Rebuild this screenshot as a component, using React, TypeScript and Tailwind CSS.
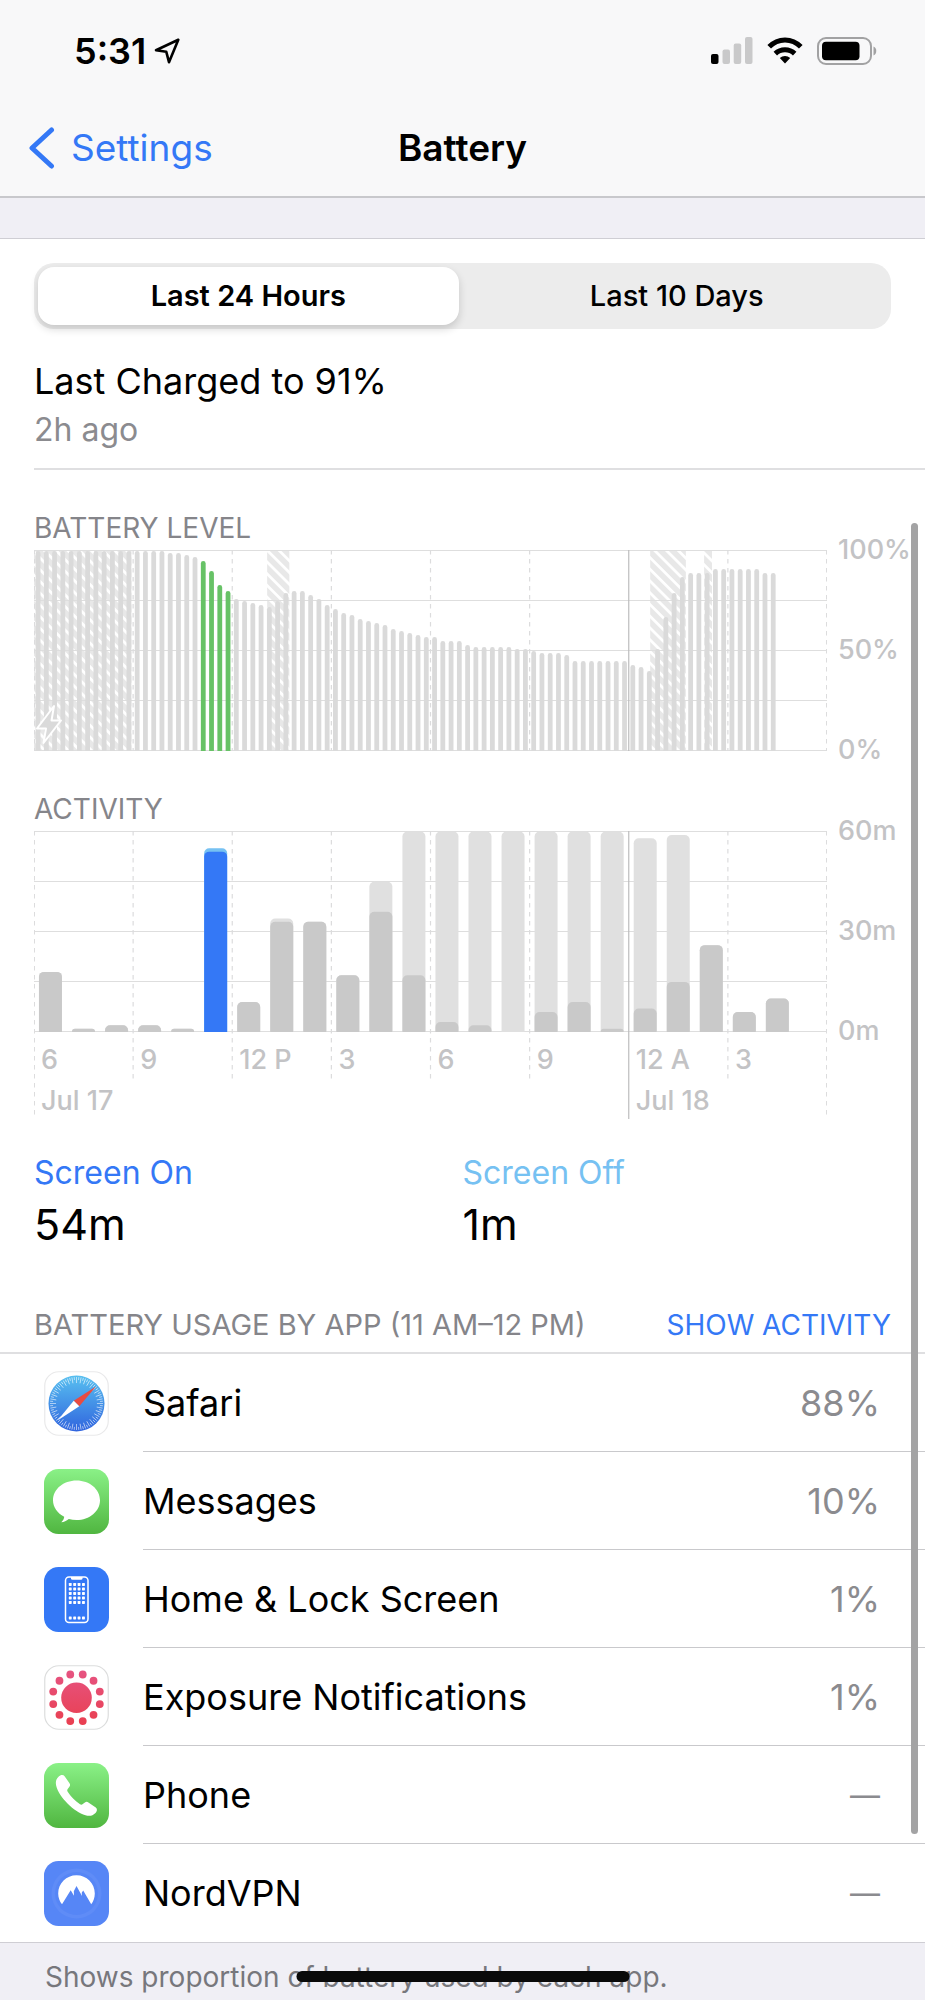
import { useState } from "react";
import type { ReactNode } from "react";

const PLOT_HEIGHT = 201;

const levels: number[] = [
  100, 100, 100, 100, 100, 100, 100, 100, 100, 100, 100, 100, 100, 100, 100, 100, 99, 99, 98, 97,
  95, 90, 83, 80, 76, 75, 74, 73, 72, 75, 79, 80, 80, 78, 76, 73, 71, 69, 68, 66,
  65, 64, 63, 61, 60, 59, 58, 57, 57, 55, 55, 55, 53, 52, 52, 52, 52, 52, 51, 51,
  50, 49, 49, 49, 48, 45, 45, 45, 45, 45, 45, 45, 43, 42, 40, 51, 67, 79, 87, 89,
  89, 89, 91, 91, 91, 91, 91, 91, 89, 89,
];

// Charging periods, as percentages of the day shown.
const charging: [number, number][] = [
  [0, 12.3],
  [29.4, 32.2],
  [77.7, 82.2],
  [84.5, 85.5],
];

// Minutes per hour: [screen on, total].
const activity: [number, number][] = [
  [18, 18], [1, 1], [2, 2], [2, 2], [1, 1], [54, 55], [9, 9], [33, 34],
  [33, 33], [17, 17], [36, 45], [17, 60], [3, 60], [2, 60], [0, 60], [6, 60],
  [9, 60], [1, 60], [7, 58], [15, 59], [26, 26], [6, 6], [10, 10],
];

const hours = ["6", "9", "12 P", "3", "6", "9", "12 A", "3"];
const SELECTED_HOUR = 5;

function Grid({ height, tail }: { height: number; tail: number }) {
  return (
    <g>
      {[0, 1, 2, 3, 4].map((n) => (
        <line key={n} x1="0" x2="100%" y1={n * 50 + 0.5} y2={n * 50 + 0.5} stroke="#dedede" strokeWidth="1" />
      ))}
      {[0, 1, 2, 3, 4, 5, 6, 7, 8].map((n) => {
        const x = `${n * 12.5}%`;
        const end = n === 0 || n === 8 ? height : height - tail;
        return n === 6 ? null : (
          <line key={n} x1={x} x2={x} y1="0" y2={end} stroke="#dcdcdd" strokeWidth={n % 8 ? 1.2 : 2} strokeDasharray="4.5 4.5" />
        );
      })}
    </g>
  );
}

function LevelChart() {
  return (
    <svg className="block h-[201px] min-w-0 flex-1" role="img" aria-label="Battery level over the last 24 hours">
      <defs>
        <pattern id="hatch" width="8.300" height="8.300" patternUnits="userSpaceOnUse" patternTransform="rotate(-45)">
          <rect width="5.600" height="8.300" fill="#e8e8e8" />
        </pattern>
      </defs>
      {charging.map(([from, to]) => (
        <rect key={from} x={`${from}%`} width={`${to - from}%`} y="0" height="201" fill="url(#hatch)" />
      ))}
      <Grid height={PLOT_HEIGHT} tail={0} />
      {levels.map((level, i) => (
        <rect
          key={i}
          x={`${((i + 0.2) / 96) * 100}%`}
          width="4.8"
          y={PLOT_HEIGHT - level * 2}
          height={level * 2 + 6}
          rx="2.4"
          fill={i >= 20 && i < 24 ? "#67c266" : "#dadada"}
        />
      ))}
      <line x1="75%" x2="75%" y1="0" y2="201" stroke="#bdbdbe" strokeWidth="1.2" />
      <path d="M20 156 L3 178.500 H12 L9.500 193 L27 170.500 H17.500 Z" fill="#dadada" stroke="#ffffff" strokeWidth="2" strokeLinejoin="round" />
    </svg>
  );
}

function ActivityChart() {
  return (
    <svg className="block h-[288px] min-w-0 flex-1" role="img" aria-label="Activity over the last 24 hours">
      <Grid height={288} tail={36} />
      <svg width="100%" height={PLOT_HEIGHT}>
        {activity.map(([on, total], i) => {
          const x = `${((i + 0.15) / 24) * 100}%`;
          const selected = i === SELECTED_HOUR;
          return (
            <g key={i}>
              <rect x={x} width="23" y={201 - total * 3.34} height={total * 3.34 + 8} rx={total < 2 ? 3 : 5} fill={selected ? "#76c1f2" : "#e0e0e0"} />
              {on > 0 && (
                <rect x={x} width="23" y={201 - on * 3.34} height={on * 3.34 + 8} rx={on < 2 ? 3 : 5} fill={selected ? "#3478f6" : "#c9c9c9"} />
              )}
            </g>
          );
        })}
      </svg>
      <line x1="75%" x2="75%" y1="0" y2="288" stroke="#bdbdbe" strokeWidth="1.2" />
      <g className="fill-[#c3c3c5] text-[27px] font-medium">
        {hours.map((label, i) => (
          <text key={i} x={`${i * 12.5}%`} dx="7" y="238">{label}</text>
        ))}
        <text x="0" dx="7" y="279">Jul 17</text>
        <text x="75%" dx="7" y="279">Jul 18</text>
      </g>
    </svg>
  );
}

function AxisLabels({ labels }: { labels: string[] }) {
  return (
    <div className="-my-4 flex h-[232px] w-[98px] shrink-0 flex-col justify-between pl-[11px] text-[27px] leading-8 font-medium text-[#c3c3c5]">
      {labels.map((label) => (
        <span key={label}>{label}</span>
      ))}
    </div>
  );
}

function IconFrame({ children }: { children: ReactNode }) {
  return (
    <svg viewBox="0 0 65 65" className="size-[65px] shrink-0" aria-hidden="true">
      <defs>
        <linearGradient id="green" x1="0" y1="0" x2="0" y2="1">
          <stop offset="0" stopColor="#8af187" />
          <stop offset="1" stopColor="#50b640" />
        </linearGradient>
        <linearGradient id="compass" x1="0" y1="0" x2="0" y2="1">
          <stop offset="0" stopColor="#58c0f0" />
          <stop offset="1" stopColor="#3064de" />
        </linearGradient>
        <linearGradient id="pink" gradientUnits="userSpaceOnUse" x1="0" y1="5" x2="0" y2="60">
          <stop offset="0" stopColor="#e65482" />
          <stop offset="1" stopColor="#e93f50" />
        </linearGradient>
      </defs>
      {children}
    </svg>
  );
}

function SafariIcon() {
  return (
    <IconFrame>
      <rect x="0.75" y="0.75" width="63.500" height="63.500" rx="14" fill="#ffffff" stroke="#e9e9ea" strokeWidth="1.2" />
      <circle cx="32.5" cy="32.500" r="28" fill="url(#compass)" />
      {Array.from({ length: 72 }, (_, i) => (
        <line key={i} x1="32.5" x2="32.5" y1="6" y2={i % 2 ? 9 : 12} stroke="#ffffff" strokeWidth="0.7" opacity="0.8" transform={`rotate(${i * 5} 32.5 32.5)`} />
      ))}
      <path d="M52 15.500 L35.300 35.200 L29.700 29.800 Z" fill="#ea4b40" />
      <path d="M13.500 49.500 L29.700 29.800 L35.300 35.200 Z" fill="#ffffff" />
    </IconFrame>
  );
}

function MessagesIcon() {
  return (
    <IconFrame>
      <rect width="65" height="65" rx="14.500" fill="url(#green)" />
      <path d="M32.500 11.500 C45.600 11.500 56 20.200 56 31.200 C56 42.200 45.600 51 32.500 51 C29.800 51 27.200 50.600 24.800 49.900 C22.400 51.800 20 53 17.300 53.300 C19.300 51.300 20.100 49.300 20.200 47.700 C13.400 44.200 9 38.200 9 31.200 C9 20.200 19.500 11.500 32.500 11.500 Z" fill="#ffffff" />
    </IconFrame>
  );
}

function HomeLockIcon() {
  return (
    <IconFrame>
      <rect width="65" height="65" rx="14.500" fill="#3478f6" />
      <rect x="21.500" y="10" width="22.500" height="45.500" rx="3.500" fill="none" stroke="#ffffff" strokeWidth="1.500" />
      <path d="M27 10 H38.500 V11.200 Q38.500 12.800 36.900 12.800 H28.600 Q27 12.800 27 11.200 Z" fill="#ffffff" />
      {[16, 20.5, 25, 29.5, 34, 49.5].map((y) =>
        [24.8, 29.2, 33.6, 38].map((x) => <rect key={`${x}-${y}`} x={x} y={y} width="2.900" height="2.900" rx="0.600" fill="#ffffff" />),
      )}
    </IconFrame>
  );
}

function ExposureIcon() {
  return (
    <IconFrame>
      <rect x="0.75" y="0.75" width="63.500" height="63.500" rx="14" fill="#ffffff" stroke="#dcdddd" strokeWidth="1.200" />
      <g fill="url(#pink)">
        <circle cx="32.500" cy="32.800" r="15.300" />
        {Array.from({ length: 12 }, (_, i) => {
          const a = ((i * 30 + 15) * Math.PI) / 180;
          return <circle key={i} cx={32.5 + 24.1 * Math.cos(a)} cy={32.8 + 24.1 * Math.sin(a)} r="3.900" />;
        })}
      </g>
    </IconFrame>
  );
}

function PhoneIcon() {
  return (
    <IconFrame>
      <rect width="65" height="65" rx="14.500" fill="url(#green)" />
      <path d="M14.500 13.700 C16.500 11.800 19.300 11.600 20.600 13.200 L25.500 20.300 C26.500 21.800 26.200 22.700 25.200 24 L23.700 26 C23 27 23.100 27.800 23.700 28.800 C26.700 33.500 31 38 36 41.200 C37 41.900 37.900 41.800 38.800 41.100 L40.900 39.500 C42.100 38.700 43.100 38.600 44.400 39.400 L51.800 44.400 C53.500 45.700 53.200 48.200 51.200 50.300 C48.800 52.800 45.500 53.500 41.500 52.300 C35.500 50.500 29 46 23.500 40.500 C18 35 13.600 28.500 12.200 22.800 C11.300 19 12.200 15.900 14.500 13.700 Z" fill="#ffffff" />
    </IconFrame>
  );
}

function NordIcon() {
  return (
    <IconFrame>
      <rect width="65" height="65" rx="14.500" fill="#5686f6" />
      <circle cx="32.500" cy="32.500" r="25" fill="#5f8cf7" />
      <circle cx="32.500" cy="32.500" r="21.500" fill="#5686f6" />
      <path d="M18 43.300 C15.600 40.300 14.200 36.500 14.200 32.500 C14.200 22.300 22.400 14.300 32.500 14.300 C42.600 14.300 50.800 22.300 50.800 32.500 C50.800 36.500 49.500 40.300 47.200 43.300 L39.200 29.500 L37.700 31.800 L38 35 L32.500 25 L29.800 30.200 L30 34.800 L26.700 29.300 Z" fill="#ffffff" />
    </IconFrame>
  );
}

const apps: { name: string; usage: string; icon: ReactNode }[] = [
  { name: "Safari", usage: "88%", icon: <SafariIcon /> },
  { name: "Messages", usage: "10%", icon: <MessagesIcon /> },
  { name: "Home & Lock Screen", usage: "1%", icon: <HomeLockIcon /> },
  { name: "Exposure Notifications", usage: "1%", icon: <ExposureIcon /> },
  { name: "Phone", usage: "—", icon: <PhoneIcon /> },
  { name: "NordVPN", usage: "—", icon: <NordIcon /> },
];

function StatusBar() {
  return (
    <div className="flex h-[101px] items-center justify-between pr-12 pl-[74px]">
      <div className="flex items-center gap-2">
        <span className="text-[36px] leading-10 font-semibold">5:31</span>
        <svg viewBox="0 0 26 26" className="size-[26px]" aria-hidden="true">
          <path d="M24.300 1.800 L2 12.300 L12.300 13.800 L15 24.200 Z" fill="none" stroke="#000000" strokeWidth="2.600" strokeLinejoin="round" />
        </svg>
      </div>
      <div className="flex items-center gap-[14px]">
        <svg viewBox="0 0 42 27" className="h-[27px] w-[42px]" aria-label="Signal, one bar" role="img">
          <rect x="0" y="17" width="7.500" height="10" rx="2" fill="#000000" />
          <rect x="11.500" y="12.500" width="7.500" height="14.500" rx="2" fill="#c9c9ca" />
          <rect x="22.700" y="6.500" width="7.500" height="20.500" rx="2" fill="#c9c9ca" />
          <rect x="34" y="0" width="7.500" height="27" rx="2" fill="#c9c9ca" />
        </svg>
        <svg viewBox="0 0 36 27" className="h-[27px] w-9" aria-label="Wi-Fi" role="img">
          <g fill="none" stroke="#000000" strokeWidth="5">
            <path d="M2.200 9.800 C11 0.600 25 0.600 33.800 9.800" />
            <path d="M8.300 16.600 C13.700 11.400 22.300 11.400 27.700 16.600" />
          </g>
          <path d="M12.800 21 C15.800 18.300 20.200 18.300 23.200 21 L18 26.600 Z" fill="#000000" />
        </svg>
        <svg viewBox="0 0 60 28" className="h-7 w-[60px]" aria-label="Battery" role="img">
          <rect x="1" y="1" width="53" height="26" rx="8" fill="none" stroke="#a2a2a3" strokeWidth="2" />
          <rect x="5" y="4.800" width="37.500" height="18.500" rx="4" fill="#000000" />
          <path d="M56.500 9.500 C60.200 10.800 60.200 17.200 56.500 18.500 Z" fill="#a2a2a3" />
        </svg>
      </div>
    </div>
  );
}

export default function App() {
  const [tab, setTab] = useState("Last 24 Hours");
  return (
    <div className="relative min-h-screen overflow-hidden bg-[#f0eff5] font-[Inter,'Liberation_Sans',sans-serif] text-black">
      <header className="border-b-2 border-[#c8c8cc] bg-[#f8f8f9]">
        <StatusBar />
        <nav className="grid h-[95px] grid-cols-3 items-center pb-[2px]">
          <a href="#settings" className="flex items-center gap-4 pl-7 text-[37px] leading-[44px] text-[#3478f6]">
            <svg viewBox="0 0 27 44" className="h-[44px] w-[27px]" aria-hidden="true">
              <path d="M23.500 4 L4 22 L23.500 40" fill="none" stroke="#3478f6" strokeWidth="5" strokeLinecap="round" strokeLinejoin="round" />
            </svg>
            Settings
          </a>
          <h1 className="text-center text-[37px] leading-[44px] font-semibold">Battery</h1>
        </nav>
      </header>

      <main className="mt-10 border-y border-[#cfced4] bg-white">
        <div className="px-[34px] pt-6">
          <div className="grid grid-cols-2 gap-2 rounded-[20px] bg-[#ececec] p-1">
            {["Last 24 Hours", "Last 10 Days"].map((label) => (
              <button
                key={label}
                type="button"
                aria-pressed={tab === label}
                onClick={() => setTab(label)}
                className={
                  tab === label
                    ? "h-[58px] rounded-2xl bg-white text-[29px] font-semibold shadow-[0_4px_8px_rgba(0,0,0,0.16)]"
                    : "h-[58px] rounded-2xl text-[29px] font-medium"
                }
              >
                {label}
              </button>
            ))}
          </div>
        </div>

        <section className="ml-[34px] border-b-2 border-[#dfdfe1] pt-[27px] pb-[14px]">
          <h2 className="text-[36px] leading-[50px]">Last Charged to 91%</h2>
          <p className="text-[32px] leading-[48px] text-[#8b8b8f]">2h ago</p>
        </section>

        <section className="pt-[38px] pl-[34px]">
          <h3 className="mb-[2px] text-[28px] leading-10 text-[#85858a]">BATTERY LEVEL</h3>
          <div className="flex">
            <LevelChart />
            <AxisLabels labels={["100%", "50%", "0%"]} />
          </div>
        </section>

        <section className="pt-[38px] pl-[34px]">
          <h3 className="mb-[2px] text-[28px] leading-10 text-[#85858a]">ACTIVITY</h3>
          <div className="flex">
            <ActivityChart />
            <AxisLabels labels={["60m", "30m", "0m"]} />
          </div>
        </section>

        <dl className="grid grid-cols-2 px-[34px] pt-[30px]">
          <div>
            <dt className="text-[32px] leading-[48px] text-[#3478f6]">Screen On</dt>
            <dd className="text-[43px] leading-[54px]">54m</dd>
          </div>
          <div>
            <dt className="text-[32px] leading-[48px] text-[#76c1f2]">Screen Off</dt>
            <dd className="text-[43px] leading-[54px]">1m</dd>
          </div>
        </dl>

        <section>
          <div className="flex items-center justify-between border-b-2 border-[#dfdfe1] px-[34px] pt-[54px] pb-[7px] leading-10">
            <h3 className="text-[29px] text-[#85858a]">BATTERY USAGE BY APP (11 AM–12 PM)</h3>
            <button type="button" className="text-[28px] text-[#3478f6]">SHOW ACTIVITY</button>
          </div>
          <ul>
            {apps.map((app) => (
              <li key={app.name} className="group flex items-center gap-[34px] pl-11">
                {app.icon}
                <div className="flex h-[98px] flex-1 items-center justify-between border-b border-[#c9c9cc] pr-[45px] text-[36px] leading-[48px] group-last:border-b-0">
                  <span>{app.name}</span>
                  <span className={app.usage === "—" ? "text-[30px] text-[#8b8b8f]" : "text-[#8b8b8f]"}>{app.usage}</span>
                </div>
              </li>
            ))}
          </ul>
        </section>
      </main>

      <footer className="px-[45px] pt-[14px] text-[28px] leading-10 text-[#77777c]">Shows proportion of battery used by each app.</footer>

      <div className="absolute top-[523px] right-[7px] bottom-[166px] w-[7px] rounded-full bg-[#a3a3a4]" />
      <div className="absolute bottom-[18px] left-1/2 h-[11px] w-[36%] -translate-x-1/2 rounded-full bg-[#0a0a0a]" />
    </div>
  );
}
